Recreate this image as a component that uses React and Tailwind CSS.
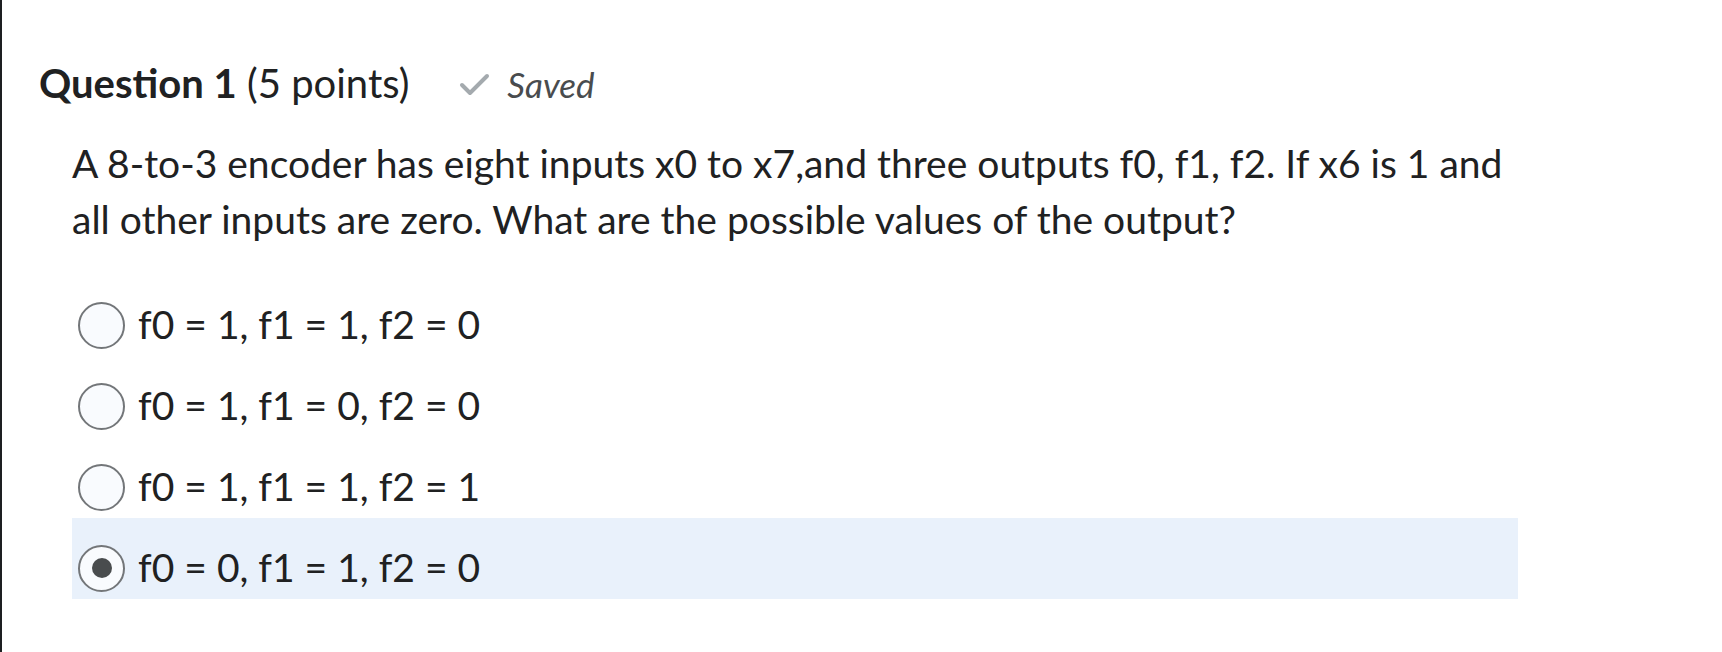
import React, { useState } from "react";

const options = [
  "f0 = 1, f1 = 1, f2 = 0",
  "f0 = 1, f1 = 0, f2 = 0",
  "f0 = 1, f1 = 1, f2 = 1",
  "f0 = 0, f1 = 1, f2 = 0",
];

const CheckIcon = () => (
  <svg width="32" height="24" viewBox="0 0 32 24" fill="none">
    <path
      d="M4 13 L12 21 L29 4"
      stroke="#a4aaae"
      strokeWidth="4"
      strokeLinecap="round"
      strokeLinejoin="round"
    />
  </svg>
);

const App = () => {
  const [selected, setSelected] = useState(3);

  return (
    <div
      className="min-h-screen w-full bg-white border-l-2 border-[#1d1f21] text-[#202122]"
      style={{ fontFamily: "Lato, 'Open Sans', sans-serif" }}
    >
      <div className="pl-[37px] pt-[58px]">
        {/* Question header */}
        <div className="flex items-baseline">
          <h2 className="text-[40px] leading-[50px]">
            <span className="font-bold">Question 1</span>{" "}
            <span className="font-normal">(5 points)</span>
          </h2>
          <div className="flex items-baseline ml-[49px] text-[#494c4e]">
            <span className="self-center mr-[17px]">
              <CheckIcon />
            </span>
            <span className="italic text-[35px]">Saved</span>
          </div>
        </div>

        {/* Question text */}
        <div className="pl-[33px] mt-[24px]">
          <p className="w-[1446px] text-[39px] leading-[56px]">
            A 8-to-3 encoder has eight inputs x0 to x7,and three outputs f0, f1,
            f2. If x6 is 1 and all other inputs are zero. What are the possible
            values of the output?
          </p>

          {/* Options */}
          <div className="mt-[28px] w-[1446px]">
            {options.map((opt, i) => (
              <label
                key={i}
                onClick={() => setSelected(i)}
                className={`flex items-start h-[81px] pt-[27px] pl-[6px] cursor-pointer ${
                  selected === i ? "bg-[#e9f1fb]" : ""
                }`}
              >
                <span className="w-[47px] h-[47px] rounded-full border-2 border-[#737679] bg-[#f9fbfe] flex items-center justify-center shrink-0">
                  {selected === i && (
                    <span className="w-[20px] h-[20px] rounded-full bg-[#494c4e]" />
                  )}
                </span>
                <span className="ml-[13px] text-[39px] leading-[45px]">{opt}</span>
              </label>
            ))}
          </div>
        </div>
      </div>
    </div>
  );
};

export default App;
